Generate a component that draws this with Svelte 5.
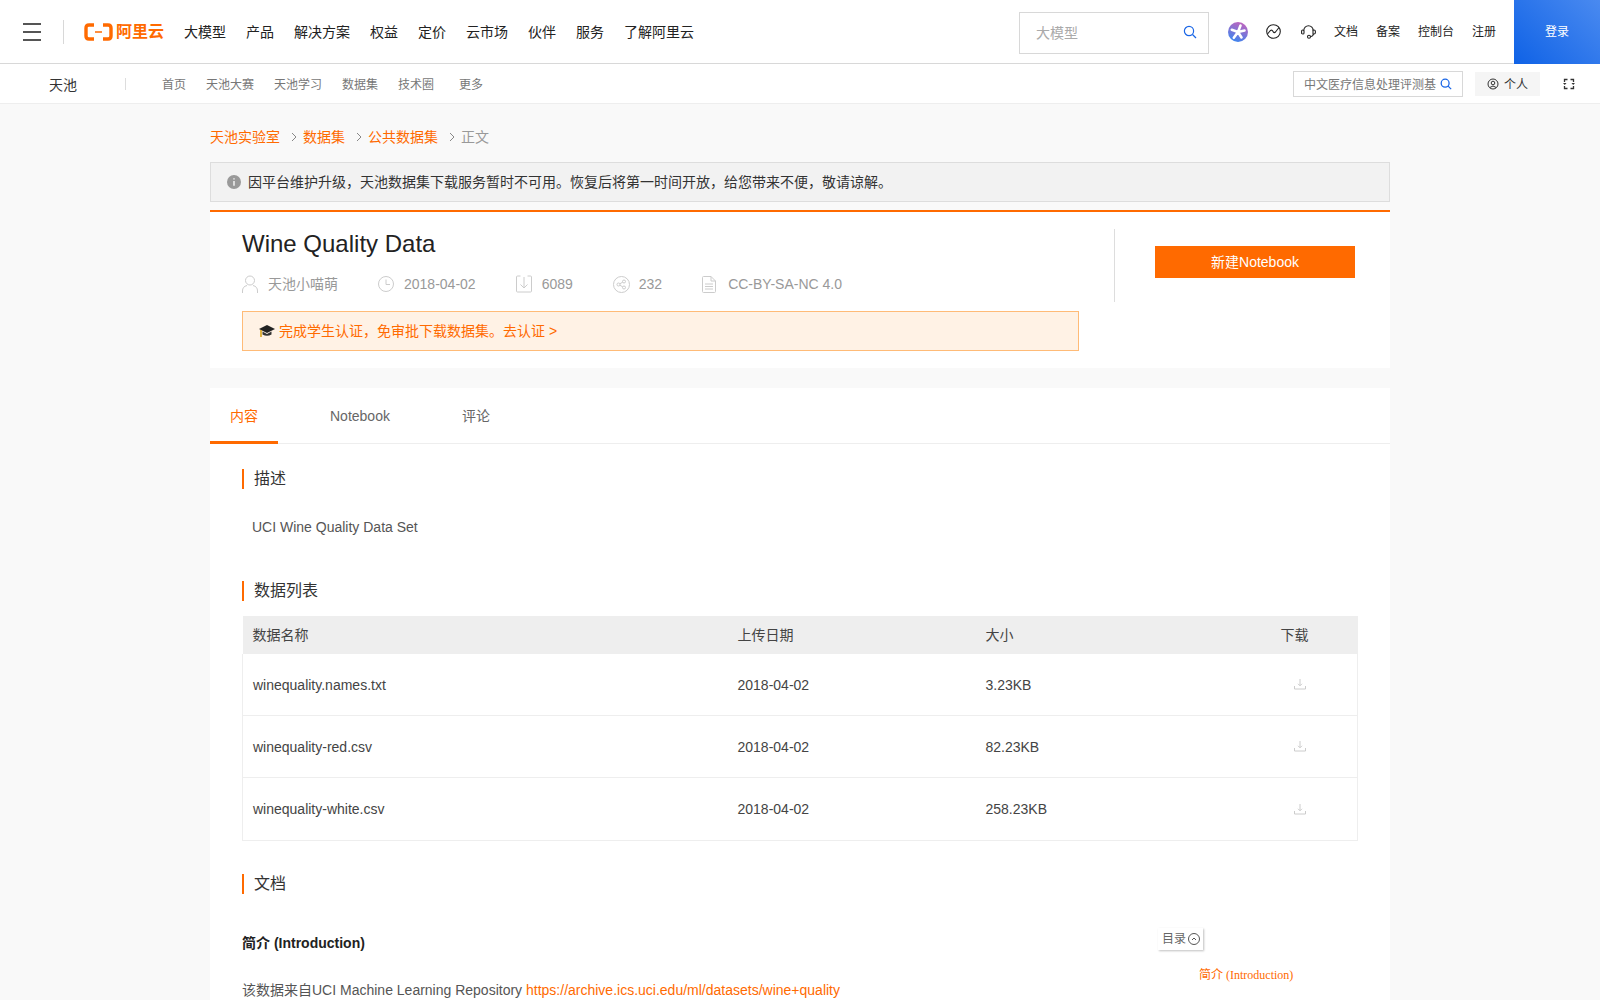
<script lang="ts">
  const mainNav = ["大模型", "产品", "解决方案", "权益", "定价", "云市场", "伙伴", "服务", "了解阿里云"];
  const subNav = ["首页", "天池大赛", "天池学习", "数据集", "技术圈"];
  const topLinks = ["文档", "备案", "控制台", "注册"];
  const files = [
    { name: "winequality.names.txt", date: "2018-04-02", size: "3.23KB" },
    { name: "winequality-red.csv", date: "2018-04-02", size: "82.23KB" },
    { name: "winequality-white.csv", date: "2018-04-02", size: "258.23KB" },
  ];
</script>

<div class="page">
  <header class="topbar">
    <div class="burger"><span></span><span></span><span></span></div>
    <div class="logo">
      <svg width="29" height="18" viewBox="0 0 29 18" fill="none">
        <path d="M10 2H5Q2 2 2 5V13Q2 16 5 16H10" stroke="#ff6a00" stroke-width="3.4" />
        <path d="M19 2H24Q27 2 27 5V13Q27 16 24 16H19" stroke="#ff6a00" stroke-width="3.4" />
        <path d="M11 9H18" stroke="#ff6a00" stroke-width="1.5" />
      </svg>
      <span>阿里云</span>
    </div>
    <nav class="main-nav">
      {#each mainNav as item}<a href="#top">{item}</a>{/each}
    </nav>
    <div class="top-search">
      <span>大模型</span>
      <svg width="14" height="14" viewBox="0 0 14 14" fill="none" stroke="#1a66e6" stroke-width="1.200">
        <circle cx="6" cy="6" r="4.600" /><path d="M9.500 9.500L13 13" />
      </svg>
    </div>
    <div class="top-icons">
      <svg class="ball" width="20" height="20" viewBox="0 0 20 20">
        <defs>
          <linearGradient id="ballFill" x1="0.7" y1="0" x2="0.3" y2="1">
            <stop offset="0" stop-color="#c264bd" />
            <stop offset="1" stop-color="#3a86f0" />
          </linearGradient>
        </defs>
        <circle cx="10" cy="10" r="10" fill="url(#ballFill)" />
        <path d="M10 10L12.500 3.500M10 10L3.800 7.800M10 10L16.500 8.500M10 10L5.800 15.800M10 10L13.500 15.500" stroke="#fff" stroke-width="2.600" stroke-linecap="round" />
      </svg>
      <svg class="globe" width="15" height="15" viewBox="0 0 15 15" fill="none" stroke="#222" stroke-width="1.100">
        <circle cx="7.500" cy="7.500" r="6.800" /><path d="M1.500 10L4.500 6.500Q6 5.500 7 7.500Q8 9.500 9.500 8L13 3.500" />
      </svg>
      <svg class="phones" width="15" height="14" viewBox="0 0 15 14" fill="none" stroke="#222" stroke-width="1.100">
        <path d="M2.800 5.500A4.700 4.700 0 0 1 12.200 5.500" />
        <rect x=".6" y="5" width="2.400" height="4" rx="1.100" />
        <path d="M12 5H13Q14.400 5 14.400 6.500V7.500Q14.400 9 13 9H12Z" />
        <path d="M12.500 9Q12 11.500 9.500 11.700" />
        <circle cx="8" cy="11.700" r="1.500" />
      </svg>
      <div class="top-links">
        {#each topLinks as link}<a href="#top">{link}</a>{/each}
      </div>
    </div>
    <button class="login">登录</button>
  </header>

  <div class="subbar">
    <span class="brand">天池</span>
    <i class="sub-sep"></i>
    <nav class="sub-nav">
      {#each subNav as item}<a href="#top">{item}</a>{/each}
      <a class="more" href="#top">更多</a>
    </nav>
    <div class="sub-search">
      <span>中文医疗信息处理评测基</span>
      <svg width="12" height="12" viewBox="0 0 14 14" fill="none" stroke="#1a66e6" stroke-width="1.500">
        <circle cx="6" cy="6" r="4.600" /><path d="M9.500 9.500L13 13" />
      </svg>
    </div>
    <div class="personal">
      <svg width="12" height="12" viewBox="0 0 12 12" fill="none" stroke="#333" stroke-width="1">
        <circle cx="6" cy="6" r="5" /><circle cx="6" cy="5" r="1.800" /><path d="M2.800 9.500Q6 6.500 9.200 9.500" />
      </svg>
      <span>个人</span>
    </div>
    <svg class="swap" width="12" height="12" viewBox="0 0 12 12" fill="none" stroke="#333" stroke-width="1.300">
      <path d="M4.500 1.500H1.500V4M7.500 1.500H10.500V4M7.500 10.500H10.500V8M4.500 10.500H1.500V8" />
      <path d="M0 5H3.500L1.800 7ZM8.500 5H12L10.200 7Z" fill="#333" stroke="none" />
    </svg>
  </div>

  <main class="content">
    <div class="crumbs">
      <a href="#top">天池实验室</a>
      <svg class="chev" width="6" height="10" viewBox="0 0 6 10" fill="none" stroke="#888"><path d="M1 1L5 5L1 9" /></svg>
      <a href="#top">数据集</a>
      <svg class="chev" width="6" height="10" viewBox="0 0 6 10" fill="none" stroke="#888"><path d="M1 1L5 5L1 9" /></svg>
      <a href="#top">公共数据集</a>
      <svg class="chev" width="6" height="10" viewBox="0 0 6 10" fill="none" stroke="#888"><path d="M1 1L5 5L1 9" /></svg>
      <span>正文</span>
    </div>

    <div class="maintenance">
      <svg width="14" height="14" viewBox="0 0 14 14">
        <circle cx="7" cy="7" r="7" fill="#999" />
        <path d="M7 3.200V4.600M7 6V10.800" stroke="#fff" stroke-width="1.300" />
      </svg>
      <span>因平台维护升级，天池数据集下载服务暂时不可用。恢复后将第一时间开放，给您带来不便，敬请谅解。</span>
    </div>

    <section class="head-card">
      <div class="head-left">
        <h1>Wine Quality Data</h1>
        <div class="meta">
          <span class="meta-item author">
            <svg width="16" height="18" viewBox="0 0 16 18" fill="none" stroke="#ccc">
              <circle cx="8" cy="5.500" r="4.500" /><path d="M.5 18V16Q.5 11.500 5 10.500M15.500 18V16Q15.500 11.500 11 10.500" />
            </svg>
            天池小喵萌
          </span>
          <span class="meta-item date">
            <svg width="16" height="16" viewBox="0 0 16 16" fill="none" stroke="#ccc">
              <circle cx="8" cy="8" r="7.500" /><path d="M8 3.500V8.500H12" />
            </svg>
            2018-04-02
          </span>
          <span class="meta-item count">
            <svg width="16" height="18" viewBox="0 0 16 18" fill="none" stroke="#ccc">
              <path d="M4.500 1H1.500Q.5 1 .5 2V16Q.5 17 1.500 17H14.500Q15.500 17 15.500 16V2Q15.500 1 14.500 1H11.500" />
              <path d="M8 2V13M4.500 9.500L8 13L11.500 9.500" />
            </svg>
            6089
          </span>
          <span class="meta-item shares">
            <svg width="17" height="17" viewBox="0 0 17 17" fill="none" stroke="#ccc">
              <circle cx="8.500" cy="8.500" r="8" /><circle cx="5.500" cy="8.500" r="1.500" /><circle cx="11" cy="5.500" r="1.500" /><circle cx="11" cy="11.500" r="1.500" />
              <path d="M6.800 7.800L9.700 6.200M6.800 9.200L9.700 10.800" />
            </svg>
            232
          </span>
          <span class="meta-item license">
            <svg width="14" height="17" viewBox="0 0 14 17" fill="none" stroke="#ccc">
              <path d="M.5 1.500Q.5.500 1.500.500H9L13.500 5V15.500Q13.500 16.500 12.500 16.500H1.500Q.5 16.500 .5 15.500ZM9 .5V5H13.500M3 8H11M3 10.500H11M3 13H11" />
            </svg>
            CC-BY-SA-NC 4.0
          </span>
        </div>
        <div class="student">
          <svg width="16" height="16" viewBox="0 0 16 16">
            <path d="M8 2L16 6L8 10L0 6Z" fill="#222" />
            <path d="M3.500 8.500V11.500Q8 14 12.500 11.500V8.500L8 11Z" fill="#333" />
            <path d="M2 7V14" stroke="#d9a21b" stroke-width="1.600" />
          </svg>
          <span>完成学生认证，免审批下载数据集。去认证 &gt;</span>
        </div>
      </div>
      <div class="head-right">
        <button class="new-notebook">新建Notebook</button>
      </div>
    </section>

    <section class="detail-card">
      <div class="tabs">
        <a class="tab active" href="#top">内容</a>
        <a class="tab" href="#top">Notebook</a>
        <a class="tab" href="#top">评论</a>
      </div>

      <div class="detail-body">
        <h2 class="sec-title">描述</h2>
        <p class="desc">UCI Wine Quality Data Set</p>

        <h2 class="sec-title list-title">数据列表</h2>
        <table class="files">
          <thead>
            <tr>
              <th class="c-name">数据名称</th>
              <th class="c-date">上传日期</th>
              <th class="c-size">大小</th>
              <th class="c-dl">下载</th>
            </tr>
          </thead>
          <tbody>
            {#each files as f}
              <tr>
                <td>{f.name}</td>
                <td>{f.date}</td>
                <td>{f.size}</td>
                <td class="dl-cell">
                  <svg width="12" height="12" viewBox="0 0 12 12" fill="none" stroke="#ccc">
                    <path d="M6 1V7.500M4 5.800L6 7.800L8 5.800M.5 8V11H11.500V8" />
                  </svg>
                </td>
              </tr>
            {/each}
          </tbody>
        </table>

        <h2 class="sec-title doc-title">文档</h2>
        <div class="doc">
          <div class="doc-text">
            <h3>简介 (Introduction)</h3>
            <p>该数据来自UCI Machine Learning Repository <a href="#top">https://archive.ics.uci.edu/ml/datasets/wine+quality</a></p>
          </div>
          <aside class="toc">
            <div class="toc-btn">
              目录
              <svg width="12" height="12" viewBox="0 0 12 12" fill="none" stroke="#555">
                <circle cx="6" cy="6" r="5.500" /><path d="M4 7L6 5L8 7" />
              </svg>
            </div>
            <a class="toc-link" href="#top">简介 (Introduction)</a>
          </aside>
        </div>
      </div>
    </section>
  </main>
</div>

<style>
  :global(body) {
    margin: 0;
    background: #f9f9f9;
  }
  a {
    color: inherit;
    text-decoration: none;
  }
  .page {
    height: 1000px;
    overflow: hidden;
    font-family: "Liberation Sans", "Noto Sans CJK SC", sans-serif;
    font-size: 14px;
    line-height: 20px;
    color: #333;
  }

  .topbar {
    display: flex;
    align-items: center;
    height: 63px;
    background: #fff;
    border-bottom: 1px solid #d8d8d8;
  }
  .burger {
    display: flex;
    flex-direction: column;
    gap: 6px;
    width: 18px;
    margin-left: 23px;
    padding-right: 22px;
    border-right: 1px solid #d8d8d8;
    height: 24px;
    justify-content: center;
  }
  .burger span {
    display: block;
    height: 2px;
    background: #555;
  }
  .logo {
    display: flex;
    align-items: center;
    gap: 3px;
    margin-left: 20px;
    color: #ff6a00;
    font-size: 16px;
    font-weight: 700;
    line-height: 20px;
  }
  .main-nav {
    display: flex;
    gap: 20px;
    margin-left: 20px;
    color: #222;
  }
  .top-search {
    display: flex;
    align-items: center;
    justify-content: space-between;
    box-sizing: border-box;
    width: 190px;
    height: 42px;
    margin-left: auto;
    margin-top: 2px;
    padding: 0 11px 0 16px;
    border: 1px solid #d8d8d8;
    color: #aaa;
  }
  .top-search svg {
    margin-top: -2px;
  }
  .top-icons {
    display: flex;
    align-items: center;
    margin-left: 19px;
  }
  .globe {
    margin-left: 18px;
  }
  .phones {
    margin-left: 20px;
  }
  .top-links {
    display: flex;
    gap: 18px;
    margin-left: 18px;
    padding-top: 1px;
    font-size: 12px;
    color: #222;
  }
  .login {
    width: 86px;
    height: 64px;
    margin-left: 18px;
    margin-bottom: -1px;
    border: 0;
    background: linear-gradient(45deg, #0f62e6, #4a8af0);
    color: #fff;
    font: inherit;
    font-size: 12px;
  }

  .subbar {
    display: flex;
    align-items: center;
    height: 39px;
    background: #fff;
    border-bottom: 1px solid #eee;
  }
  .brand {
    margin-left: 49px;
    padding-top: 2px;
    color: #333;
  }
  .sub-sep {
    width: 1px;
    height: 12px;
    margin-left: 48px;
    background: #ddd;
  }
  .sub-nav {
    display: flex;
    gap: 20px;
    margin-left: 36px;
    padding-top: 3px;
    font-size: 12px;
    color: #777;
  }
  .more {
    margin-left: 5px;
  }
  .sub-search {
    display: flex;
    align-items: center;
    justify-content: space-between;
    box-sizing: border-box;
    width: 170px;
    height: 26px;
    margin-left: auto;
    padding: 0 10px 0 10px;
    border: 1px solid #d8d8d8;
    font-size: 12px;
    color: #777;
    white-space: nowrap;
    overflow: hidden;
  }
  .sub-search span,
  .personal span {
    padding-top: 2px;
  }
  .personal {
    display: flex;
    align-items: center;
    justify-content: center;
    gap: 5px;
    width: 65px;
    height: 24px;
    margin-left: 12px;
    background: #f5f5f5;
    font-size: 12px;
  }
  .swap {
    margin: 0 25px 0 23px;
  }

  .content {
    width: 1180px;
    margin: 0 auto;
  }
  .crumbs {
    display: flex;
    align-items: center;
    height: 20px;
    padding-top: 23px;
    color: #ff6a00;
  }
  .crumbs span {
    color: #999;
  }
  .chev {
    margin: 0 6px 0 11px;
  }
  .maintenance {
    display: flex;
    align-items: center;
    gap: 7px;
    box-sizing: border-box;
    height: 40px;
    margin-top: 15px;
    padding-left: 16px;
    background: #f2f2f2;
    border: 1px solid #ddd;
  }

  .head-card {
    display: flex;
    margin-top: 8px;
    padding: 16px 0 17px 32px;
    background: #fff;
    border-top: 2px solid #ff6a00;
    box-sizing: border-box;
    height: 158px;
  }
  .head-left {
    width: 837px;
  }
  h1 {
    margin: 0;
    font-size: 24px;
    font-weight: 400;
    line-height: 32px;
    color: #222;
  }
  .meta {
    display: flex;
    align-items: center;
    height: 20px;
    margin-top: 14px;
    color: #999;
  }
  .meta-item {
    display: flex;
    align-items: center;
    gap: 10px;
  }
  .date,
  .count,
  .shares {
    margin-left: 40px;
  }
  .shares svg {
    margin-right: -1px;
  }
  .license {
    margin-left: 40px;
    gap: 12px;
  }
  .student {
    display: flex;
    align-items: center;
    gap: 4px;
    box-sizing: border-box;
    height: 40px;
    margin-top: 17px;
    padding-left: 16px;
    background: #fff2e5;
    border: 1px solid #ffbb77;
    color: #ff6a00;
  }
  .head-right {
    box-sizing: border-box;
    width: 243px;
    height: 73px;
    margin-top: 1px;
    margin-left: 35px;
    padding: 17px 0 0 40px;
    border-left: 1px solid #ddd;
  }
  .new-notebook {
    display: block;
    width: 200px;
    height: 32px;
    border: 0;
    background: #ff6a00;
    color: #fff;
    font: inherit;
  }

  .detail-card {
    margin-top: 20px;
    background: #fff;
  }
  .tabs {
    display: flex;
    height: 55px;
    border-bottom: 1px solid #eee;
    gap: 32px;
  }
  .tab {
    box-sizing: border-box;
    height: 56px;
    padding: 18px 20px 0;
    color: #666;
  }
  .tab.active {
    color: #ff6a00;
    border-bottom: 3px solid #ff6a00;
  }
  .detail-body {
    padding: 25px 32px 40px;
  }
  .sec-title {
    margin: 0;
    padding-left: 10px;
    border-left: 2px solid #ff6a00;
    font-size: 16px;
    font-weight: 400;
    line-height: 20px;
    color: #333;
  }
  .desc {
    margin: 28px 0 0 10px;
    line-height: 20px;
    color: #555;
  }
  .list-title {
    margin-top: 44px;
  }
  .files {
    width: 100%;
    margin-top: 15px;
    border-collapse: collapse;
    table-layout: fixed;
  }
  .files th {
    box-sizing: border-box;
    height: 38px;
    padding: 0 0 0 10px;
    background: #eee;
    font-weight: 400;
    text-align: left;
    color: #444;
  }
  .files .c-dl {
    padding-left: 11px;
  }
  .files td {
    height: 62px;
    padding: 2px 0 0 10px;
    border-bottom: 1px solid #eee;
    color: #444;
    box-sizing: border-box;
  }
  .files tbody tr:first-child td {
    height: 61px;
  }
  .files tbody tr:last-child td {
    height: 63px;
    padding-top: 0;
  }
  .files td:last-child {
    border-right: 1px solid #eee;
  }
  .files td:first-child {
    border-left: 1px solid #eee;
  }
  .c-name {
    width: 485px;
  }
  .c-date {
    width: 248px;
  }
  .c-size {
    width: 294px;
  }
  .files .dl-cell {
    padding-left: 24px;
  }
  .files tbody tr:last-child .dl-cell {
    padding-top: 2px;
  }
  .doc-title {
    margin-top: 33px;
  }
  .doc {
    display: flex;
    justify-content: space-between;
    margin-top: 39px;
  }
  h3 {
    margin: 0;
    font-size: 14px;
    line-height: 20px;
    color: #222;
  }
  .doc-text p {
    margin: 27px 0 0;
    line-height: 20px;
    color: #555;
  }
  .doc-text a {
    color: #ff6a00;
  }
  .toc {
    width: 200px;
    margin-top: -5px;
  }
  .toc-btn {
    display: inline-flex;
    align-items: center;
    gap: 2px;
    padding: 1px 3px 1px 4px;
    background: #fff;
    box-shadow: 1px 1px 2px rgba(0, 0, 0, 0.25);
    font-size: 12px;
    color: #666;
  }
  .toc-link {
    display: block;
    margin: 15px 0 0 41px;
    font-family: "Liberation Serif", "Noto Sans CJK SC", serif;
    font-size: 12px;
    color: #ff6a00;
  }
</style>
